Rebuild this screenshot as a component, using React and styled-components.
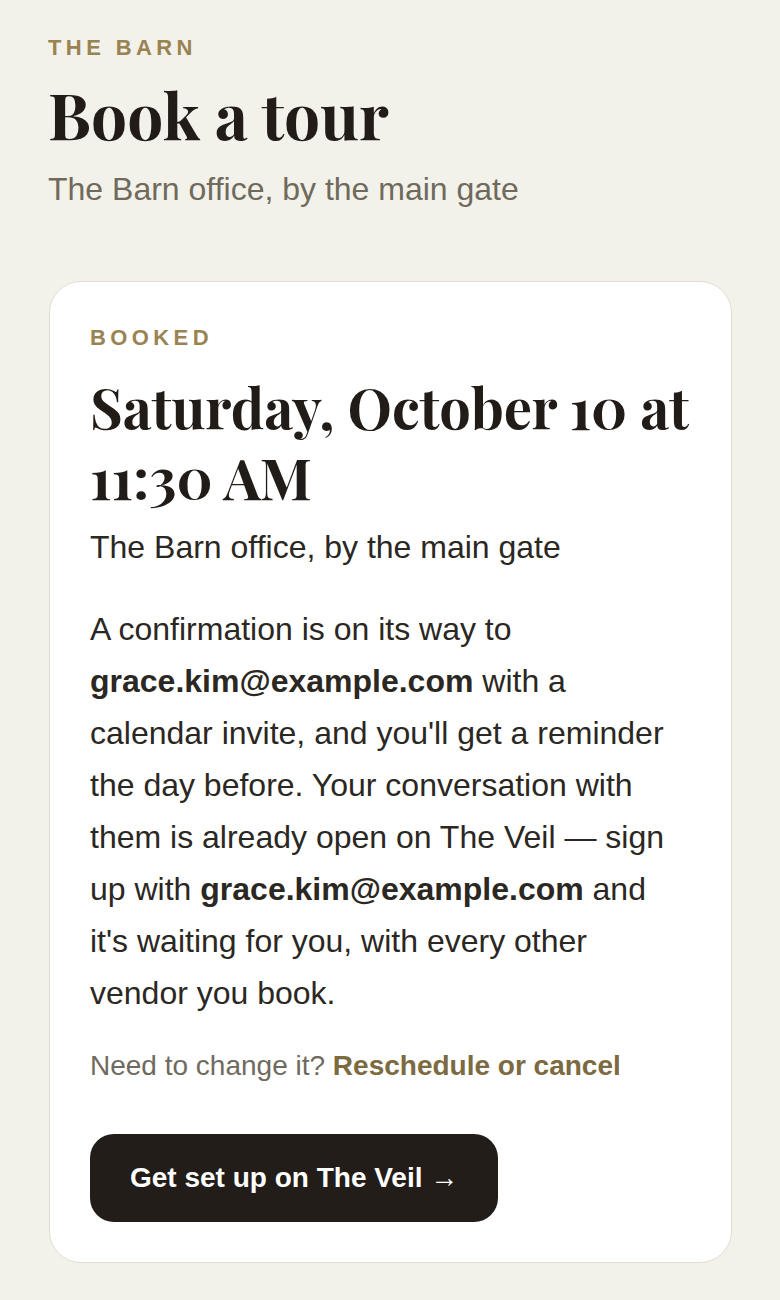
import React from 'react';
import styled, { createGlobalStyle } from 'styled-components';

const GlobalStyle = createGlobalStyle`
  html, body {
    margin: 0;
    padding: 0;
    background: #f2f2ea;
  }
  body {
    font-family: "Liberation Sans", Arial, sans-serif;
    color: #2b2722;
  }
`;

const serif = `"Playfair Display", "DejaVu Serif", "Liberation Serif", serif`;

const Page = styled.main`
  padding: 34px 48px 40px;
  display: flex;
  flex-direction: column;
`;

const Eyebrow = styled.div`
  font-size: 22px;
  line-height: 28px;
  font-weight: 700;
  letter-spacing: 0.2em;
  text-transform: uppercase;
  color: #9a8352;
`;

const Title = styled.h1`
  margin: 16px 0 0;
  font-family: ${serif};
  font-size: 64px;
  line-height: 72px;
  font-weight: 700;
  color: #211c17;
`;

const Subtitle = styled.p`
  margin: ${(p) => (p.$inCard ? '15px' : '19px')} 0 0;
  font-size: 32px;
  line-height: 40px;
  color: ${(p) => (p.$inCard ? '#2b2722' : '#6f6a5c')};
`;

const Card = styled.section`
  margin: 72px 0 0 1px;
  background: #ffffff;
  border: 1px solid #e2dfd2;
  border-radius: 32px;
  padding: 40px;
  display: flex;
  flex-direction: column;
  align-items: flex-start;
`;

const Status = styled(Eyebrow)`
  line-height: 32px;
`;

const When = styled.h2`
  margin: 18px 0 0;
  font-family: ${serif};
  font-size: 56px;
  line-height: 70px;
  font-weight: 700;
  color: #211c17;
`;

const Body = styled.p`
  margin: 36px 0 0;
  font-size: 32px;
  line-height: 52px;
  color: #2b2722;

  strong {
    font-weight: 700;
    color: #2b2722;
  }
`;

const Change = styled.p`
  margin: 27px 0 0;
  font-size: 28px;
  line-height: 40px;
  color: #6f6a5e;
`;

const Link = styled.a`
  font-weight: 700;
  color: #7c6a40;
  text-decoration: none;
`;

const Button = styled.button`
  margin-top: 48px;
  border: none;
  border-radius: 24px;
  background: #221d18;
  color: #ffffff;
  font-family: "Liberation Sans", Arial, sans-serif;
  font-size: 28px;
  font-weight: 700;
  line-height: 32px;
  padding: 28px 40px;
  cursor: pointer;
`;

const email = 'grace.kim@example.com';

export default function App() {
  return (
    <>
      <GlobalStyle />
      <Page>
        <Eyebrow>The Barn</Eyebrow>
        <Title>Book a tour</Title>
        <Subtitle>The Barn office, by the main gate</Subtitle>

        <Card>
          <Status>Booked</Status>
          <When>Saturday, October 10 at 11:30 AM</When>
          <Subtitle $inCard>The Barn office, by the main gate</Subtitle>
          <Body>
            A confirmation is on its way to <strong>{email}</strong> with a
            calendar invite, and you'll get a reminder the day before. Your
            conversation with them is already open on The Veil — sign up with{' '}
            <strong>{email}</strong> and it's waiting for you, with every other
            vendor you book.
          </Body>
          <Change>
            Need to change it? <Link href="#">Reschedule or cancel</Link>
          </Change>
          <Button>Get set up on The Veil →</Button>
        </Card>
      </Page>
    </>
  );
}
